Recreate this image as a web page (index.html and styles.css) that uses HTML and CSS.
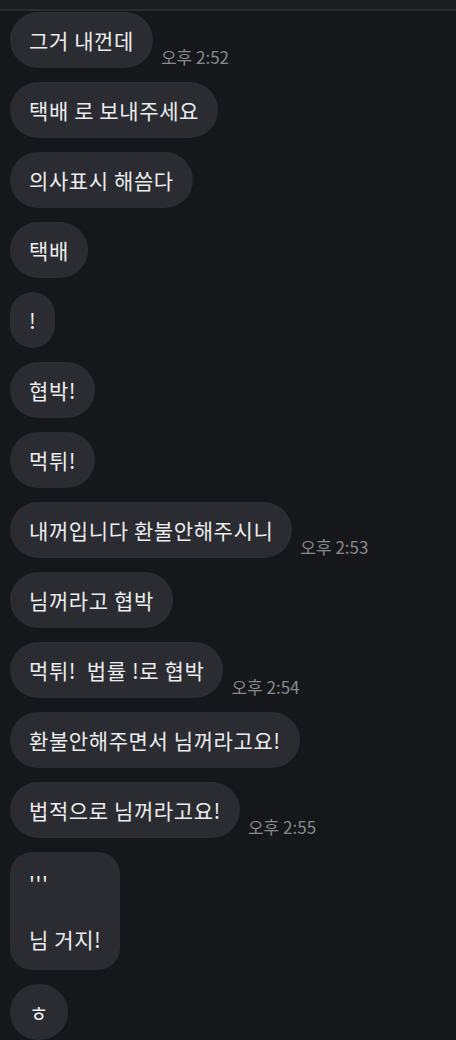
FILE: index.html
```html
<!DOCTYPE html>
<html>
<head>
    <title>Chat</title>
    <meta name="viewport" content="width=device-width, initial-scale=1.0">
    <link rel="stylesheet" href="styles.css">
</head>
<body>
    <div class="top-bar"></div>

    <div class="chat">
        <div class="row">
            <div class="bubble">그거 내껀데</div>
            <span class="time">오후 2:52</span>
        </div>
        <div class="row"><div class="bubble">택배 로 보내주세요</div></div>
        <div class="row"><div class="bubble">의사표시 해씀다</div></div>
        <div class="row"><div class="bubble">택배</div></div>
        <div class="row"><div class="bubble">!</div></div>
        <div class="row"><div class="bubble">협박!</div></div>
        <div class="row"><div class="bubble">먹튀!</div></div>
        <div class="row">
            <div class="bubble">내꺼입니다 환불안해주시니</div>
            <span class="time">오후 2:53</span>
        </div>
        <div class="row"><div class="bubble">님꺼라고 협박</div></div>
        <div class="row">
            <div class="bubble">먹튀!&nbsp; 법률 !로 협박</div>
            <span class="time">오후 2:54</span>
        </div>
        <div class="row"><div class="bubble">환불안해주면서 님꺼라고요!</div></div>
        <div class="row">
            <div class="bubble">법적으로 님꺼라고요!</div>
            <span class="time">오후 2:55</span>
        </div>
        <div class="row">
            <div class="bubble multi">'''<br><br>님 거지!</div>
        </div>
        <div class="row"><div class="bubble">ㅎ</div></div>
    </div>
</body>
</html>
```

FILE: styles.css
```css
body {
    margin: 0;
    background-color: #16171b;
    font-family: "Noto Sans CJK KR", "Noto Sans", sans-serif;
    overflow: hidden;
}

.top-bar {
    height: 9px;
    background-color: #1b1c20;
    border-bottom: 2px solid #2a2c31;
}

.chat {
    padding: 1px 10px 0;
}

.row {
    display: flex;
    align-items: flex-end;
    gap: 8px;
    margin-bottom: 14px;
}

.bubble {
    background-color: #2a2c31;
    color: #ececee;
    font-size: 21px;
    letter-spacing: 0.6px;
    line-height: 28px;
    padding: 14px 19px;
    border-radius: 28px;
    white-space: nowrap;
}

.bubble.multi {
    padding: 17px 19px;
    border-radius: 22px;
}

.time {
    color: #88898d;
    font-size: 17px;
    line-height: 20px;
    margin-bottom: 1px;
    white-space: nowrap;
}
```
